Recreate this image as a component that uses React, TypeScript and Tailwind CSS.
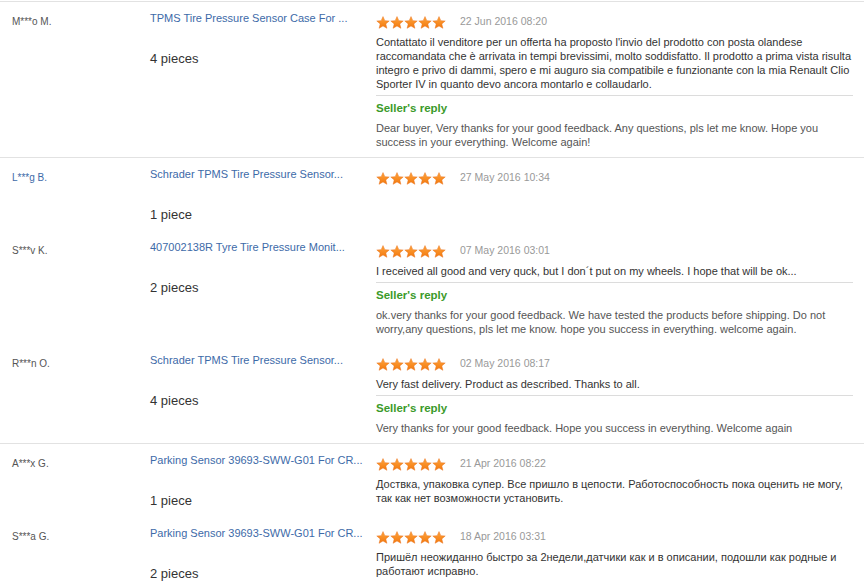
import { useId } from "react";

type Review = {
  name: string;
  nameIsLink?: boolean;
  product: string;
  qty: string;
  date: string;
  text?: string;
  reply?: string;
  divider?: boolean;
};

const reviews: Review[] = [
  {
    name: "M***o M.",
    product: "TPMS Tire Pressure Sensor Case For ...",
    qty: "4 pieces",
    date: "22 Jun 2016 08:20",
    text: "Contattato il venditore per un offerta ha proposto l'invio del prodotto con posta olandese raccomandata che è arrivata in tempi brevissimi, molto soddisfatto. Il prodotto a prima vista risulta integro e privo di dammi, spero e mi auguro sia compatibile e funzionante con la mia Renault Clio Sporter IV in quanto devo ancora montarlo e collaudarlo.",
    reply:
      "Dear buyer, Very thanks for your good feedback. Any questions, pls let me know. Hope you success in your everything. Welcome again!",
    divider: true,
  },
  {
    name: "L***g B.",
    nameIsLink: true,
    product: "Schrader TPMS Tire Pressure Sensor...",
    qty: "1 piece",
    date: "27 May 2016 10:34",
  },
  {
    name: "S***v K.",
    product: "407002138R Tyre Tire Pressure Monit...",
    qty: "2 pieces",
    date: "07 May 2016 03:01",
    text: "I received all good and very quck, but I don´t put on my wheels. I hope that will be ok...",
    reply:
      "ok.very thanks for your good feedback. We have tested the products before shipping. Do not worry,any questions, pls let me know. hope you success in everything. welcome again.",
  },
  {
    name: "R***n O.",
    product: "Schrader TPMS Tire Pressure Sensor...",
    qty: "4 pieces",
    date: "02 May 2016 08:17",
    text: "Very fast delivery. Product as described. Thanks to all.",
    reply: "Very thanks for your good feedback. Hope you success in everything. Welcome again",
    divider: true,
  },
  {
    name: "A***x G.",
    product: "Parking Sensor 39693-SWW-G01 For CR...",
    qty: "1 piece",
    date: "21 Apr 2016 08:22",
    text: "Доствка, упаковка супер. Все пришло в цепости. Работоспособность пока оценить не могу, так как нет возможности установить.",
  },
  {
    name: "S***a G.",
    product: "Parking Sensor 39693-SWW-G01 For CR...",
    qty: "2 pieces",
    date: "18 Apr 2016 03:31",
    text: "Пришёл неожиданно быстро за 2недели,датчики как и в описании, подошли как родные и работают исправно.",
  },
];

const Star = () => {
  const id = useId();
  return (
    <svg width="14" height="13" viewBox="0 0 24 23">
      <defs>
        <linearGradient id={id} x1="0" y1="0" x2="0" y2="1">
          <stop offset="0" stopColor="#ffa53d" />
          <stop offset="1" stopColor="#f2780e" />
        </linearGradient>
      </defs>
      <polygon
        points="12,1 15.2,8.2 23,8.8 17,14 18.9,21.8 12,17.6 5.1,21.8 7,14 1,8.8 8.8,8.2"
        fill={`url(#${id})`}
        stroke="#e8701a"
        strokeWidth="0.8"
        strokeLinejoin="round"
      />
    </svg>
  );
};

const Stars = () => (
  <div className="flex w-[70px]">
    {[0, 1, 2, 3, 4].map((i) => (
      <Star key={i} />
    ))}
  </div>
);

const ReviewRow = ({ r }: { r: Review }) => (
  <div
    className={`flex pt-[9px] pb-[8px] pl-[12px] ${
      r.divider ? "border-b border-[#e2e2e2]" : ""
    }`}
  >
    <div
      className={`w-[138px] shrink-0 pt-[4px] text-[10px] leading-[14px] ${
        r.nameIsLink ? "text-[#3d6aa8]" : "text-[#555]"
      }`}
    >
      {r.name}
    </div>
    <div className="w-[226px] shrink-0">
      <div className="text-[11px] leading-[14px] whitespace-nowrap text-[#3d6aa8]">
        {r.product}
      </div>
      <div className="mt-[26px] text-[13px] leading-[16px] text-[#333]">{r.qty}</div>
    </div>
    <div className="w-[477px] shrink-0 pt-[4px]">
      <div className="flex h-[14px] items-center gap-[14px]">
        <Stars />
        <span className="text-[10.5px] text-[#999]">{r.date}</span>
      </div>
      {r.text && (
        <p className="mt-[6px] text-[11px] leading-[14px] text-[#333]">{r.text}</p>
      )}
      {r.reply && (
        <div className="mt-[4px] border-t border-[#dcdcdc] pt-[5px]">
          <div className="text-[11.5px] leading-[14px] font-bold text-[#3b9a2a]">
            Seller's reply
          </div>
          <p className="mt-[6px] text-[11px] leading-[14px] text-[#555]">{r.reply}</p>
        </div>
      )}
    </div>
  </div>
);

export default function App() {
  return (
    <div
      className="h-[588px] w-[864px] overflow-hidden bg-white"
      style={{ fontFamily: '"Liberation Sans", Arial, sans-serif' }}
    >
      <div className="mt-[1px] border-t border-[#e2e2e2]">
        {reviews.map((r, i) => (
          <ReviewRow key={i} r={r} />
        ))}
      </div>
    </div>
  );
}
